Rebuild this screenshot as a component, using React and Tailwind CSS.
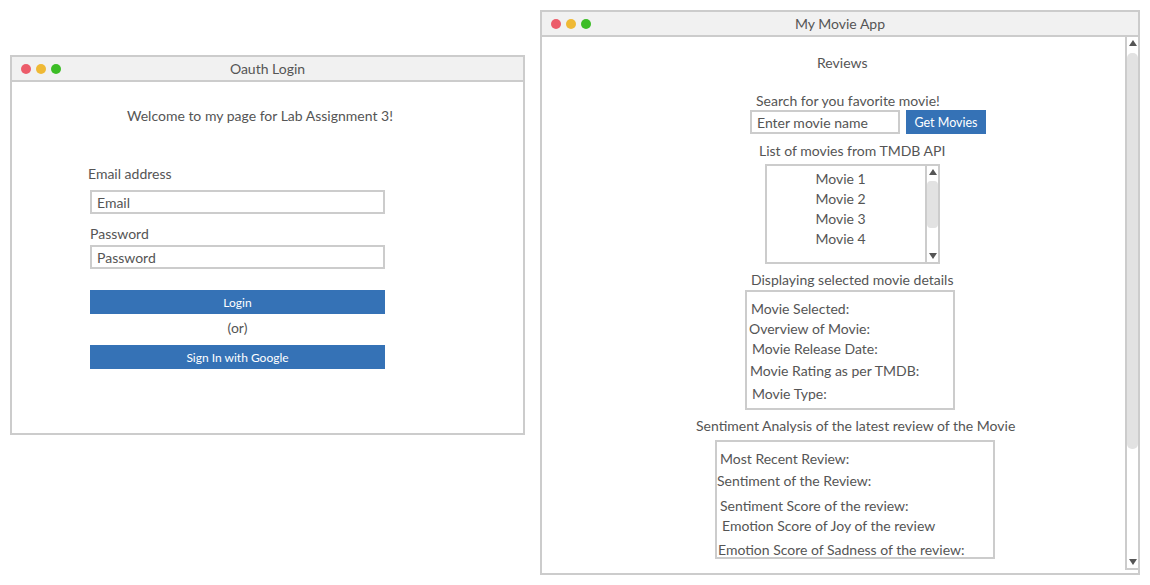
import React from 'react';

const font = { fontFamily: 'Lato, "Open Sans", sans-serif' };

function TitleBar({ title }) {
  return (
    <div className="relative flex h-[25px] items-center justify-center border-b-2 border-[#cccccc] bg-[#f1f1f1]">
      <div className="absolute left-[9px] top-[7px] flex gap-[5px]">
        <span className="h-[10px] w-[10px] rounded-full bg-[#ec5c6a]" />
        <span className="h-[10px] w-[10px] rounded-full bg-[#efb935]" />
        <span className="h-[10px] w-[10px] rounded-full bg-[#3cbd26]" />
      </div>
      <span className="text-[14px] text-[#555555]">{title}</span>
    </div>
  );
}

function Arrow({ down }) {
  return (
    <svg width="8" height="6" viewBox="0 0 8 6">
      <path d={down ? 'M0 0 L8 0 L4 6 Z' : 'M0 6 L8 6 L4 0 Z'} fill="#555555" />
    </svg>
  );
}

function Field({ placeholder }) {
  return (
    <div className="flex h-[24px] w-[295px] items-center border-2 border-[#cccccc] pl-[5px] pt-[2px] text-[14px] text-[#555555]">
      {placeholder}
    </div>
  );
}

function BlueButton({ children }) {
  return (
    <div className="flex h-[24px] w-[295px] items-center justify-center bg-[#3572b6] pt-[2px] text-[12px] text-white">
      {children}
    </div>
  );
}

function LoginWindow() {
  return (
    <div className="absolute left-[10px] top-[55px] h-[380px] w-[515px] border-2 border-[#cccccc] bg-white">
      <TitleBar title="Oauth Login" />
      <div className="flex flex-col items-start text-[14px] leading-[20px] text-[#555555]">
        <div className="ml-[115px] mt-[24px]">Welcome to my page for Lab Assignment 3!</div>
        <div className="ml-[76px] mt-[38px]">Email address</div>
        <div className="ml-[78px] mt-[6px]"><Field placeholder="Email" /></div>
        <div className="ml-[78px] mt-[10px]">Password</div>
        <div className="ml-[78px] mt-[1px]"><Field placeholder="Password" /></div>
        <div className="ml-[78px] mt-[21px]"><BlueButton>Login</BlueButton></div>
        <div className="ml-[78px] mt-[4px] w-[295px] text-center">(or)</div>
        <div className="ml-[78px] mt-[7px]"><BlueButton>Sign In with Google</BlueButton></div>
      </div>
    </div>
  );
}

const details = [
  ['Movie Selected:', 'ml-[4px] mt-[7px]'],
  ['Overview of Movie:', 'ml-[2px]'],
  ['Movie Release Date:', 'ml-[5px]'],
  ['Movie Rating as per TMDB:', 'ml-[3px] mt-[2px]'],
  ['Movie Type:', 'ml-[5px] mt-[3px]'],
];

const sentiment = [
  ['Most Recent Review:', 'ml-[3px] mt-[7px]'],
  ['Sentiment of the Review:', 'ml-0 mt-[2px]'],
  ['Sentiment Score of the review:', 'ml-[3px] mt-[5px]'],
  ['Emotion Score of Joy of the review', 'ml-[5px]'],
  ['Emotion Score of Sadness of the review:', 'ml-[1px] mt-[4px]'],
];

function MovieWindow() {
  return (
    <div className="absolute left-[540px] top-[10px] flex h-[565px] w-[600px] flex-col border-2 border-[#cccccc] bg-white">
      <TitleBar title="My Movie App" />
      <div className="flex flex-1">
        <div className="flex flex-1 flex-col items-start text-[14px] leading-[20px] text-[#555555]">
          <div className="ml-[275px] mt-[16px]">Reviews</div>
          <div className="ml-[214px] mt-[18px] leading-[19px]">Search for you favorite movie!</div>
          <div className="ml-[208px] flex gap-[6px]">
            <div className="flex h-[24px] w-[150px] items-center border-2 border-[#cccccc] pl-[5px] pt-[2px]">Enter movie name</div>
            <div className="flex h-[24px] w-[80px] items-center justify-center bg-[#3572b6] pt-[1px] text-[12.5px] text-white">Get Movies</div>
          </div>
          <div className="ml-[217px] mt-[7px]">List of movies from TMDB API</div>
          <div className="ml-[223px] mt-[3px] flex h-[100px] w-[175px] border-2 border-[#cccccc]">
            <div className="flex flex-1 flex-col items-center pr-[11px] pt-[3px]">
              <div>Movie 1</div>
              <div>Movie 2</div>
              <div>Movie 3</div>
              <div>Movie 4</div>
            </div>
            <div className="flex w-[13px] flex-col items-center border-l-2 border-[#cccccc] py-[3px]">
              <Arrow />
              <div className="mt-[6px] h-[47px] w-[11px] rounded-[4px] bg-[#e2e2e2]" />
              <div className="flex-1" />
              <Arrow down />
            </div>
          </div>
          <div className="ml-[209px] mt-[6px]">Displaying selected movie details</div>
          <div className="ml-[203px] flex h-[120px] w-[210px] flex-col items-start border-2 border-[#cccccc]">
            {details.map(([t, c]) => (
              <div key={t} className={c}>{t}</div>
            ))}
          </div>
          <div className="ml-[154px] mt-[6px]">Sentiment Analysis of the latest review of the Movie</div>
          <div className="ml-[173px] mt-[4px] flex h-[119px] w-[280px] flex-col items-start border-2 border-[#cccccc]">
            {sentiment.map(([t, c]) => (
              <div key={t} className={c}>{t}</div>
            ))}
          </div>
        </div>
        <div className="mb-[3px] flex w-[13px] flex-col items-center border-b-2 border-l-2 border-[#cccccc] pt-[3px] pb-[3px]">
          <Arrow />
          <div className="mt-[7px] h-[396px] w-[11px] rounded-[5px] bg-[#e2e2e2]" />
          <div className="flex-1" />
          <Arrow down />
        </div>
      </div>
    </div>
  );
}

export default function App() {
  return (
    <div className="relative h-[585px] w-[1150px] overflow-hidden bg-white" style={font}>
      <LoginWindow />
      <MovieWindow />
    </div>
  );
}
